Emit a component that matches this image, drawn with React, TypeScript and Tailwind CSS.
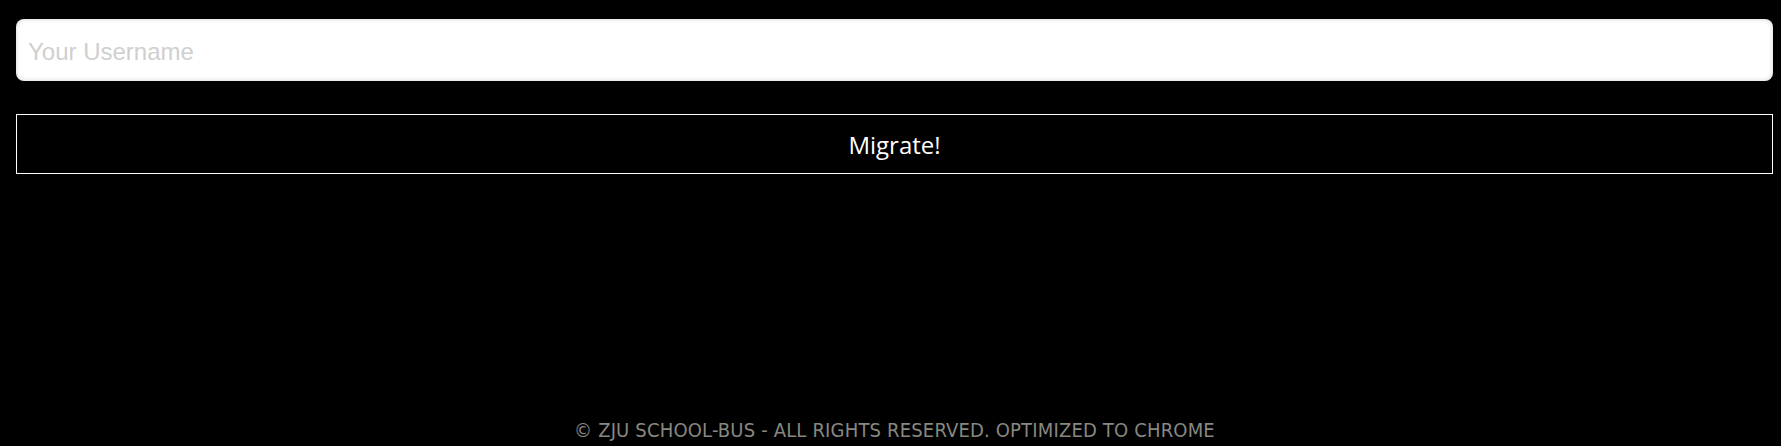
import React from "react";

export default function App() {
  return (
    <div className="bg-white">
      <div className="flex h-[446px] flex-col bg-black pl-4 pr-2 pt-[19px]">
        <input
          type="text"
          placeholder="Your Username"
          className="h-[62px] w-full rounded-lg bg-white px-3 pt-1 text-[24px] text-black shadow-[inset_0_0_5px_rgba(0,0,0,0.18)] outline-none placeholder:text-[#cfcfcf]"
          style={{ fontFamily: '"Liberation Sans", Arial, sans-serif' }}
        />
        <button
          type="button"
          className="mt-[33px] h-[60px] w-full border border-white bg-black pt-[1px] text-[24px] text-white"
          style={{ fontFamily: '"Open Sans", "Noto Sans", sans-serif' }}
        >
          Migrate!
        </button>
        <div className="mt-auto flex justify-center pb-[3px]">
          <span
            className="text-[20px] leading-[26px] tracking-[0.17px] text-[#888880]"
            style={{ fontFamily: '"DejaVu Sans Condensed", "Liberation Sans Narrow", sans-serif' }}
          >
            © ZJU SCHOOL-BUS - ALL RIGHTS RESERVED. OPTIMIZED TO CHROME
          </span>
        </div>
      </div>
    </div>
  );
}
